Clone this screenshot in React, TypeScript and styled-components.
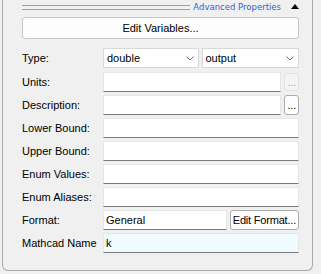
import styled, { createGlobalStyle } from "styled-components";

const GlobalStyle = createGlobalStyle`
  html, body {
    margin: 0;
    padding: 0;
    background: #f0f0f0;
  }
  body {
    font-family: "Liberation Sans", Arial, sans-serif;
    font-size: 11px;
    color: #000;
  }
`;

const Page = styled.div`
  width: 321px;
  height: 274px;
  box-sizing: border-box;
  padding: 0 8px 0 2px;
  background: #f0f0f0;
  overflow: hidden;
`;

const Panel = styled.div`
  height: 271px;
  box-sizing: border-box;
  border: 1px solid #a9a9a9;
  border-top: none;
  border-radius: 0 0 6px 6px;
  padding: 0 13px 0 19px;
  display: flex;
  flex-direction: column;
`;

const Header = styled.div`
  height: 14px;
  display: flex;
  align-items: center;
  gap: 3px;
`;

const Rule = styled.div`
  flex: 1;
  height: 3px;
  border-top: 1px solid #a0a0a0;
  border-bottom: 1px solid #a0a0a0;
  margin-top: 1px;
`;

const HeaderLink = styled.span`
  font-family: "DejaVu Sans", "Liberation Sans", sans-serif;
  font-size: 8.5px;
  color: #2f62d4;
  white-space: nowrap;
  line-height: 12px;
`;

const Arrow = styled.span`
  width: 0;
  height: 0;
  margin: 0 0 1px 7px;
  border-left: 4.5px solid transparent;
  border-right: 4.5px solid transparent;
  border-bottom: 5px solid #000;
`;

const WideButton = styled.button`
  margin-top: 3px;
  height: 22px;
  box-sizing: border-box;
  border: 1px solid #c8c8c8;
  border-radius: 3px;
  background: #fdfdfd;
  font: inherit;
  color: #000;
  padding: 0;
`;

const Form = styled.div`
  margin-top: 9px;
  display: flex;
  flex-direction: column;
  gap: 3px;
`;

const Row = styled.div<{ $gap?: number }>`
  display: flex;
  align-items: center;
  height: 20px;
  gap: 3px;
  margin-bottom: ${(p) => p.$gap ?? 0}px;
`;

const Label = styled.label`
  width: 78px;
  flex: none;
  white-space: nowrap;
`;

const Select = styled.div<{ $w: number }>`
  width: ${(p) => p.$w}px;
  height: 20px;
  box-sizing: border-box;
  border: 1px solid #d9d9d9;
  background: #fff;
  display: flex;
  align-items: center;
  justify-content: space-between;
  padding: 0 4px 0 3px;
`;

const Field = styled.div<{ $tint?: boolean }>`
  flex: 1;
  height: 20px;
  box-sizing: border-box;
  border: 1px solid #e6e6e6;
  border-bottom-color: #7a7a7a;
  background: ${(p) => (p.$tint ? "#f0fbff" : "#fff")};
  padding: 0 2px;
  display: flex;
  align-items: center;
`;

const SmallButton = styled.button<{ $disabled?: boolean }>`
  flex: none;
  height: ${(p) => (p.$disabled ? 18 : 20)}px;
  box-sizing: border-box;
  border: 1px solid ${(p) => (p.$disabled ? "#e2e2e2" : "#adadad")};
  border-radius: 3px;
  background: ${(p) => (p.$disabled ? "#f4f4f4" : "#fdfdfd")};
  color: ${(p) => (p.$disabled ? "#a8a8a8" : "#000")};
  font: inherit;
  letter-spacing: -0.2px;
  padding: 0 2px;
  line-height: 14px;
`;

const Chevron = () => (
  <svg width="8" height="5" viewBox="0 0 8 5">
    <path d="M0.5 0.5 L4 4 L7.5 0.5" fill="none" stroke="#6d6d6d" strokeWidth="1" />
  </svg>
);

const plainRows = ["Lower Bound:", "Upper Bound:", "Enum Values:", "Enum Aliases:"];

export default function App() {
  return (
    <>
      <GlobalStyle />
      <Page>
        <Panel>
          <Header>
            <Rule />
            <HeaderLink>Advanced Properties</HeaderLink>
            <Arrow />
          </Header>
          <WideButton>Edit Variables...</WideButton>
          <Form>
            <Row $gap={1}>
              <Label>Type:</Label>
              <Select $w={96}>
                double
                <Chevron />
              </Select>
              <Select $w={98}>
                output
                <Chevron />
              </Select>
            </Row>
            <Row>
              <Label>Units:</Label>
              <Field />
              <SmallButton $disabled>...</SmallButton>
            </Row>
            <Row>
              <Label>Description:</Label>
              <Field />
              <SmallButton>...</SmallButton>
            </Row>
            {plainRows.map((l) => (
              <Row key={l}>
                <Label>{l}</Label>
                <Field />
              </Row>
            ))}
            <Row>
              <Label>Format:</Label>
              <Field>General</Field>
              <SmallButton>Edit Format...</SmallButton>
            </Row>
            <Row>
              <Label>Mathcad Name</Label>
              <Field $tint>k</Field>
            </Row>
          </Form>
        </Panel>
      </Page>
    </>
  );
}
